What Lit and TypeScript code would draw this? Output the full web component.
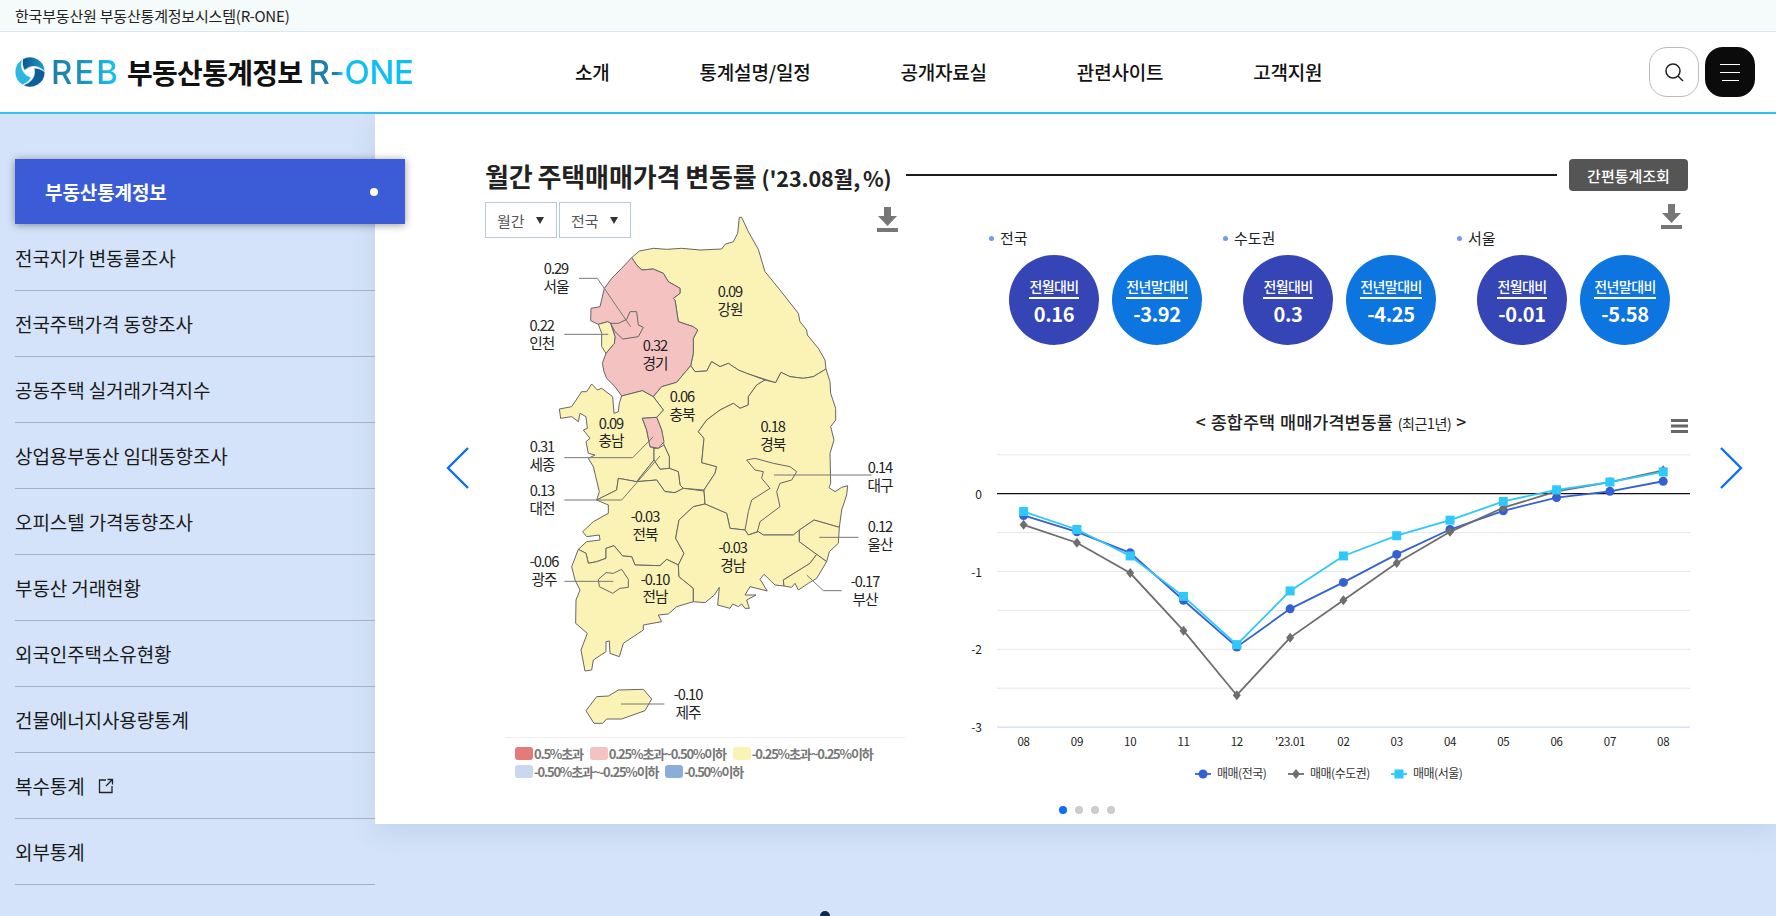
import { LitElement, css, html, svg } from "lit";
import { customElement } from "lit/decorators.js";

const FONT = css`"Noto Sans CJK KR", "Noto Sans", sans-serif`;

// map coordinates are 3x page pixels, so a 1px stroke is stroke-width 3
const YELLOW = "#fbf3b5";
const PINK = "#f5c2c2";

const REGIONS: { fill: string; pts: string }[] = [
  // 강원
  { fill: YELLOW, pts: "455,203 478,183 520,175 560,178 605,175 660,180 725,177 735,163 760,155 773,130 778,82 785,82 805,125 835,178 855,245 900,300 955,370 960,395 980,420 982,435 1015,475 1035,510 1038,537 1000,560 970,565 930,560 903,547 887,578 855,568 800,550 775,540 745,520 720,530 695,515 680,543 645,545 632,527 640,490 640,445 653,420 640,410 595,395 585,330 580,325 600,310 600,295 565,275 550,250 520,237 485,240 470,225" },
  // 경기
  { fill: PINK, pts: "455,203 470,225 485,240 520,237 550,250 565,275 600,295 600,310 580,325 585,330 595,395 640,410 653,420 640,445 640,490 632,527 590,577 545,590 520,620 487,602 425,618 405,590 380,565 372,545 367,520 378,490 403,460 405,440 392,400 383,395 355,403 332,392 333,355 360,350 373,295 395,265 425,235" },
  // 인천
  { fill: YELLOW, pts: "355,403 383,395 392,400 405,440 403,460 378,490 365,470 365,430" },
  // 서울
  { fill: PINK, pts: "392,400 415,400 440,388 450,365 470,365 475,405 490,412 475,440 428,447 405,425" },
  // 충북
  { fill: YELLOW, pts: "520,620 545,590 590,577 632,527 645,545 680,543 695,515 720,530 745,520 775,540 800,550 855,570 830,585 805,620 805,645 780,655 760,640 720,660 680,690 655,725 672,745 665,818 710,830 705,850 672,900 610,895 600,885 595,845 568,835 568,800 552,765 545,720 530,682 550,660" },
  // 충남
  { fill: YELLOW, pts: "425,618 487,602 520,620 550,660 530,682 487,685 500,720 510,770 522,775 522,810 470,875 415,865 410,900 350,930 358,905 340,830 325,805 345,795 325,790 318,755 330,745 310,720 322,715 318,680 300,670 295,695 275,680 242,685 238,657 275,650 305,605 320,605 335,582 352,600 365,595 398,620 402,670 415,665 418,640" },
  // 세종
  { fill: PINK, pts: "487,685 530,682 545,720 552,755 535,775 510,770 500,720" },
  // 대전
  { fill: YELLOW, pts: "522,775 535,775 552,765 568,800 568,835 540,838 522,810" },
  // 대전 남쪽
  { fill: YELLOW, pts: "522,810 540,838 568,835 595,845 600,885 610,895 585,908 555,905 530,870 470,875" },
  // 전북
  { fill: YELLOW, pts: "350,930 410,900 415,865 470,875 530,870 555,905 585,908 610,895 672,903 675,942 640,950 597,990 587,1045 612,1090 595,1125 560,1108 540,1127 465,1125 455,1100 428,1098 402,1067 378,1075 378,1105 350,1115 325,1120 318,1090 295,1078 320,1055 360,1050 358,1035 320,1040 308,1025 340,995 385,970 385,945" },
  // 전남
  { fill: YELLOW, pts: "295,1078 275,1130 285,1170 300,1200 288,1230 287,1300 322,1330 303,1380 315,1443 335,1440 340,1410 378,1385 378,1355 388,1353 390,1390 418,1400 430,1360 490,1320 490,1305 545,1295 535,1275 565,1272 590,1250 640,1235 640,1195 597,1160 595,1125 560,1108 540,1127 465,1125 455,1100 428,1098 402,1067 378,1075 378,1105 350,1115 325,1120 318,1090" },
  // 광주
  { fill: YELLOW, pts: "355,1168 378,1148 400,1150 425,1138 445,1168 445,1192 420,1195 398,1210 358,1190" },
  // 경북
  { fill: YELLOW, pts: "855,570 887,578 903,547 930,560 970,565 1000,560 1038,537 1050,575 1052,610 1067,655 1067,690 1052,710 1062,750 1050,790 1052,880 1047,893 1065,905 1085,892 1103,887 1100,915 1085,960 1078,1012 1002,990 958,1020 940,1035 850,1035 835,1025 805,1035 795,1020 750,1015 740,970 675,942 672,900 705,850 710,830 665,818 672,745 655,725 680,690 720,660 760,640 780,655 805,645 805,620 830,585" },
  // 대구
  { fill: YELLOW, pts: "800,810 825,805 880,820 930,830 950,845 935,870 900,880 890,905 900,950 840,995 832,1025 805,1035 795,1020 805,965 815,930 870,895 845,865 850,845 825,840" },
  // 경남
  { fill: YELLOW, pts: "675,942 640,950 597,990 587,1045 612,1090 595,1125 597,1160 640,1195 640,1235 675,1238 703,1215 718,1192 713,1245 750,1255 758,1242 775,1250 785,1242 795,1255 808,1255 800,1230 828,1215 795,1215 810,1190 862,1203 840,1168 852,1153 885,1185 912,1188 910,1170 990,1120 1010,1093 958,1055 958,1020 940,1035 850,1035 835,1025 805,1035 795,1020 750,1015 740,970" },
  // 울산
  { fill: YELLOW, pts: "958,1020 1002,990 1078,1012 1075,1060 1048,1085 1040,1115 958,1055" },
  // 부산
  { fill: YELLOW, pts: "1010,1093 1040,1115 1025,1140 1010,1165 985,1180 955,1200 945,1180 935,1192 912,1188 910,1170 990,1120" },
  // 제주
  { fill: YELLOW, pts: "318,1562 350,1520 385,1518 415,1500 490,1498 515,1527 495,1562 425,1587 380,1587 368,1600 342,1600" },
];

const LEADERS = [
  "297,265 352,265 452,410",
  "253,433 385,433",
  "253,803 458,803 520,740",
  "253,930 425,930 540,798",
  "882,855 1175,855",
  "1018,1042 1135,1042",
  "980,1155 1030,1202 1085,1202",
  "253,1174 400,1174",
  "423,1542 553,1542",
];

const LABELS: [string, string, number, number][] = [
  ["0.29", "서울", 228, 252],
  ["0.22", "인천", 185, 423],
  ["0.32", "경기", 525, 483],
  ["0.09", "강원", 750, 321],
  ["0.06", "충북", 606, 636],
  ["0.09", "충남", 393, 716],
  ["0.18", "경북", 878, 726],
  ["0.31", "세종", 186, 786],
  ["0.13", "대전", 186, 918],
  ["0.14", "대구", 1200, 849],
  ["-0.03", "전북", 495, 996],
  ["-0.03", "경남", 758, 1089],
  ["0.12", "울산", 1200, 1026],
  ["-0.06", "광주", 192, 1131],
  ["-0.10", "전남", 525, 1184],
  ["-0.17", "부산", 1155, 1191],
  ["-0.10", "제주", 624, 1531],
];

const LEGEND: [string, string][] = [
  ["#e57a7a", "0.5% 초과"],
  ["#f5c2c2", "0.25% 초과 ~ 0.50% 이하"],
  ["#fbf3b5", "-0.25% 초과 ~ 0.25% 이하"],
  ["#c9d8ef", "-0.50% 초과 ~ -0.25% 이하"],
  ["#8cadd9", "-0.50% 이하"],
];

const downloadIcon = html`<svg class="dl" width="21" height="25" viewBox="0 0 21 25" fill="#777">
  <path d="M7 0h7v9h6l-9.5 10L1 9h6z" /><rect y="21" width="21" height="4" />
</svg>`;

@customElement("region-map")
export class RegionMap extends LitElement {
  static styles = css`
    :host {
      display: block;
    }
    svg {
      display: block;
    }
    .num,
    .name {
      font-family: ${FONT};
      font-size: 44px;
      letter-spacing: -3px;
      fill: #222;
      text-anchor: middle;
    }
    .legend {
      width: 400px;
      box-sizing: border-box;
      margin-left: 25px;
      padding: 9px 10px 0;
      border-top: 1px solid #eee;
      display: flex;
      flex-wrap: wrap;
      gap: 5px 7px;
    }
    .item {
      display: flex;
      align-items: center;
      gap: 1px;
      height: 13px;
      font-family: ${FONT};
      font-size: 13px;
      font-weight: 700;
      letter-spacing: -1.25px;
      word-spacing: -1.5px;
      color: #777;
    }
    .swatch {
      width: 18px;
      height: 13px;
      border-radius: 3px;
    }
  `;

  render() {
    return html`
      <svg width="460" height="547" viewBox="0 0 1380 1641">
        ${REGIONS.map(
          (r) => svg`<polygon points=${r.pts} fill=${r.fill} stroke="#666" stroke-width="3" stroke-linejoin="round" />`
        )}
        ${LEADERS.map(
          (p) => svg`<polyline points=${p} fill="none" stroke="#777" stroke-width="3" />`
        )}
        ${LABELS.map(
          ([n, name, x, y]) => svg`
            <text class="num" x=${x} y=${y}>${n}</text>
            <text class="name" x=${x} y=${y + 53}>${name}</text>`
        )}
      </svg>
      <div class="legend">
        ${LEGEND.map(
          ([c, t]) => html`<div class="item"><span class="swatch" style="background:${c}"></span>${t}</div>`
        )}
      </div>
    `;
  }
}

const MONTHS = ["08", "09", "10", "11", "12", "'23.01", "02", "03", "04", "05", "06", "07", "08"];
const NATION = [-0.28, -0.49, -0.76, -1.37, -1.97, -1.48, -1.14, -0.78, -0.46, -0.22, -0.05, 0.03, 0.16];
const METRO = [-0.4, -0.63, -1.02, -1.76, -2.59, -1.85, -1.37, -0.89, -0.49, -0.18, 0.03, 0.15, 0.3];
const SEOUL = [-0.23, -0.46, -0.8, -1.32, -1.94, -1.25, -0.8, -0.54, -0.34, -0.1, 0.05, 0.15, 0.28];

const BLUE = "#3561d0";
const GREY = "#6e6e6e";
const CYAN = "#2ec8fb";

const px = (i: number) => 63.6 + 53.3 * i;
const py = (v: number) => 93.7 - v * 77.8;

function marker(kind: string, x: number, y: number, color: string) {
  if (kind === "circle") return svg`<circle cx=${x} cy=${y} r="4.5" fill=${color} />`;
  if (kind === "diamond") return svg`<path d="M${x} ${y - 5}l4 5-4 5-4-5z" fill=${color} />`;
  return svg`<rect x=${x - 4.5} y=${y - 4.5} width="9" height="9" fill=${color} />`;
}

@customElement("trend-chart")
export class TrendChart extends LitElement {
  static styles = css`
    :host {
      display: block;
    }
    svg {
      display: block;
      overflow: visible;
    }
    text {
      font-family: ${FONT};
      fill: #222;
    }
    .title {
      font-size: 17.5px;
      font-weight: 500;
      text-anchor: middle;
      word-spacing: 1px;
    }
    .small {
      font-size: 14px;
      font-weight: 400;
      letter-spacing: -0.4px;
    }
    .ylab {
      font-size: 12px;
      text-anchor: end;
    }
    .xlab {
      font-size: 11.5px;
      letter-spacing: -0.3px;
      text-anchor: middle;
    }
    .leg {
      font-size: 12px;
      letter-spacing: -0.5px;
      fill: #333;
    }
  `;

  render() {
    const lines = [-2.5, -2, -1.5, -1, -0.5, 0.5];
    const series: [number[], string, string][] = [
      [NATION, BLUE, "circle"],
      [METRO, GREY, "diamond"],
      [SEOUL, CYAN, "square"],
    ];
    const legend: [string, string, string, number][] = [
      ["매매(전국)", BLUE, "circle", 235],
      ["매매(수도권)", GREY, "diamond", 328],
      ["매매(서울)", CYAN, "square", 431],
    ];
    return html`
      <svg width="728" height="390" viewBox="0 0 728 390">
        <text class="title" x="371" y="29">&lt; 종합주택 매매가격변동률 <tspan class="small">(최근1년)</tspan> &gt;</text>
        <rect x="711" y="19" width="17" height="3" fill="#666" />
        <rect x="711" y="24.5" width="17" height="3" fill="#666" />
        <rect x="711" y="30" width="17" height="3" fill="#666" />
        ${lines.map(
          (v) => svg`<line x1="37" x2="730" y1=${py(v)} y2=${py(v)} stroke="#e6e6e6" />`
        )}
        <line x1="37" x2="730" y1=${py(-3)} y2=${py(-3)} stroke="#c4d2ea" />
        <line x1="37" x2="730" y1=${py(0)} y2=${py(0)} stroke="#111" stroke-width="1.3" />
        ${[0, -1, -2, -3].map(
          (v) => svg`<text class="ylab" x="22" y=${py(v) + 5}>${v}</text>`
        )}
        ${MONTHS.map(
          (m, i) => svg`<text class="xlab" x=${px(i)} y="346">${m}</text>`
        )}
        ${series.map(
          ([vals, color, kind]) => svg`
            <polyline fill="none" stroke=${color} stroke-width="1.8"
              points=${vals.map((v, i) => `${px(i)},${py(v)}`).join(" ")} />
            ${vals.map((v, i) => marker(kind, px(i), py(v), color))}`
        )}
        ${legend.map(
          ([t, color, kind, x]) => svg`
            <line x1=${x} x2=${x + 16} y1="374" y2="374" stroke=${color} stroke-width="1.8" />
            ${marker(kind, x + 8, 374, color)}
            <text class="leg" x=${x + 22} y="378">${t}</text>`
        )}
      </svg>
    `;
  }
}

const MENU = [
  "전국지가 변동률조사",
  "전국주택가격 동향조사",
  "공동주택 실거래가격지수",
  "상업용부동산 임대동향조사",
  "오피스텔 가격동향조사",
  "부동산 거래현황",
  "외국인주택소유현황",
  "건물에너지사용량통계",
  "복수통계",
  "외부통계",
];

const STATS: { name: string; month: string; year: string }[] = [
  { name: "전국", month: "0.16", year: "-3.92" },
  { name: "수도권", month: "0.3", year: "-4.25" },
  { name: "서울", month: "-0.01", year: "-5.58" },
];

const BLADE = "M15 0A15 15 0 0 1 28 22.5C26 14 20 9 11 11 11 7 12.5 3 15 0Z";

@customElement("app-root")
export class AppRoot extends LitElement {
  static styles = css`
    :host {
      display: block;
      position: relative;
      width: 1776px;
      height: 916px;
      overflow: hidden;
      background: #d4e3f9;
      font-family: ${FONT};
      color: #111;
    }
    .topbar {
      height: 31px;
      padding-left: 15px;
      display: flex;
      align-items: center;
      background: #f5fafb;
      border-bottom: 1px solid #dbe8f3;
      font-size: 15px;
      letter-spacing: -0.2px;
      color: #222;
    }
    .header {
      height: 80px;
      display: flex;
      align-items: center;
      background: #fff;
      border-bottom: 2px solid #2ec4f3;
    }
    .logo {
      width: 575px;
      padding-left: 15px;
      box-sizing: border-box;
      display: flex;
      align-items: center;
      flex: none;
    }
    .reb,
    .rone {
      font-family: Inter, sans-serif;
      font-size: 33px;
      font-weight: 500;
      line-height: 1;
      background-clip: text;
      -webkit-background-clip: text;
      color: transparent;
    }
    .reb {
      width: 68px;
      margin-left: 6px;
      letter-spacing: 2px;
      white-space: nowrap;
      background-image: linear-gradient(90deg, #1e7fa8, #1e90b8 45%, #18c8f5);
    }
    .logo b {
      margin-left: 8px;
      font-size: 28px;
      font-weight: 700;
      letter-spacing: -0.7px;
      color: #111;
    }
    .rone {
      margin-left: 6px;
      letter-spacing: -0.3px;
      background-image: linear-gradient(90deg, #1e7fa8 27%, #0cc0f5 31%);
    }
    .nav {
      display: flex;
      gap: 90px;
      margin-top: -2px;
      font-size: 19px;
      font-weight: 500;
      letter-spacing: -0.2px;
    }
    .tools {
      margin-left: auto;
      margin-right: 21px;
      display: flex;
      gap: 6px;
    }
    .search,
    .burger {
      width: 50px;
      height: 50px;
      border-radius: 18px;
      box-sizing: border-box;
      display: flex;
      align-items: center;
      justify-content: center;
    }
    .search {
      border: 1px solid #bbb;
    }
    .burger {
      background: #0b0b0b;
      flex-direction: column;
      gap: 7px;
      align-items: center;
    }
    .burger i {
      display: block;
      width: 20px;
      height: 1px;
      background: #fff;
    }
    .burger i:last-child {
      width: 17px;
    }
    .body {
      display: flex;
      align-items: flex-start;
    }
    .side {
      position: relative;
      z-index: 1;
      width: 375px;
      flex: none;
      padding-top: 45px;
    }
    .active {
      width: 390px;
      height: 65px;
      margin-left: 15px;
      box-sizing: border-box;
      padding: 0 27px 0 30px;
      display: flex;
      align-items: center;
      justify-content: space-between;
      background: #3b5cd6;
      box-shadow: 0 1px 8px rgba(0, 0, 0, 0.4);
      color: #fff;
      font-size: 19px;
      font-weight: 700;
      letter-spacing: -0.1px;
    }
    .active i {
      width: 8px;
      height: 8px;
      border-radius: 50%;
      background: #fff;
    }
    .menu {
      margin: 1px 0 0 15px;
    }
    .menu div {
      height: 66px;
      box-sizing: border-box;
      display: flex;
      align-items: center;
      gap: 13px;
      border-bottom: 1px solid #a9afbe;
      font-size: 19px;
      letter-spacing: -0.1px;
      color: #1a1a1a;
    }
    .panel {
      position: relative;
      flex: 1;
      min-width: 0;
      height: 710px;
      box-sizing: border-box;
      padding: 45px 88px 10px 110px;
      display: flex;
      flex-direction: column;
      background: #fff;
      box-shadow: 0 8px 24px rgba(60, 90, 140, 0.12);
    }
    .title-row {
      height: 32px;
      display: flex;
      align-items: center;
      flex: none;
    }
    h2 {
      margin: 0;
      font-size: 26px;
      font-weight: 700;
      letter-spacing: -0.1px;
      word-spacing: -1px;
      white-space: nowrap;
      color: #222;
    }
    h2 small {
      font-size: 21.5px;
      word-spacing: -2px;
    }
    .rule {
      flex: 1;
      height: 2px;
      margin: 0 12px 0 14px;
      background: #1a1a1a;
    }
    .quick {
      width: 119px;
      height: 32px;
      border-radius: 4px;
      background: #555;
      color: #fff;
      font-size: 15px;
      font-weight: 500;
      display: flex;
      align-items: center;
      justify-content: center;
    }
    .cols {
      display: flex;
      margin-top: 11px;
    }
    .left {
      width: 475px;
      flex: none;
    }
    .sel-row {
      display: flex;
      gap: 2px;
      padding-right: 62px;
    }
    .sel {
      width: 72px;
      height: 36px;
      box-sizing: border-box;
      border: 1px solid #b5cbe0;
      padding-left: 11px;
      display: flex;
      align-items: center;
      font-size: 15px;
      color: #555;
    }
    .sel i {
      margin-left: 11px;
      border-left: 4.5px solid transparent;
      border-right: 4.5px solid transparent;
      border-top: 7px solid #333;
    }
    .dl {
      display: block;
    }
    .sel-row .dl {
      margin: 5px 0 0 auto;
    }
    region-map {
      margin: -48px 0 0 -5px;
    }
    .right {
      flex: 1;
      min-width: 0;
    }
    .dl-row {
      display: flex;
      justify-content: flex-end;
      padding: 2px 6px 0 0;
    }
    .stats {
      display: flex;
      margin-left: 31px;
    }
    .group {
      flex: none;
      width: 234px;
    }
    .group h3 {
      margin: 0 0 8px -2px;
      height: 18px;
      display: flex;
      align-items: center;
      gap: 6px;
      font-size: 15px;
      font-weight: 400;
      line-height: 18px;
      color: #222;
    }
    .group h3 i {
      width: 5px;
      height: 5px;
      border-radius: 50%;
      background: #6f9bf0;
    }
    .circles {
      display: flex;
      gap: 13px;
      margin-left: 18px;
    }
    .circle {
      width: 90px;
      height: 90px;
      border-radius: 50%;
      display: flex;
      flex-direction: column;
      align-items: center;
      padding-top: 21px;
      box-sizing: border-box;
      color: #fff;
      background: #3545b5;
    }
    .circle.y {
      background: #0d75df;
    }
    .circle span {
      padding-bottom: 1px;
      border-bottom: 2px solid #fff;
      font-size: 14px;
      font-weight: 500;
      line-height: 20px;
      letter-spacing: -0.6px;
    }
    .circle b {
      margin-top: 2px;
      font-size: 20px;
      font-weight: 700;
      line-height: 26px;
      letter-spacing: -0.4px;
    }
    trend-chart {
      margin-top: 55px;
    }
    .dots {
      margin-top: auto;
      display: flex;
      justify-content: center;
      gap: 8px;
    }
    .dots i {
      width: 8px;
      height: 8px;
      border-radius: 50%;
      background: #ccc;
    }
    .dots i:first-child {
      background: #0d6efd;
    }
    .arrow {
      position: absolute;
      top: 332px;
    }
    .prev {
      left: 71px;
    }
    .next {
      right: 33px;
    }
    .peek {
      position: absolute;
      left: 820px;
      top: 911px;
      width: 10px;
      height: 10px;
      border-radius: 50%;
      background: #12294f;
    }
  `;

  render() {
    return html`
      <div class="topbar">한국부동산원 부동산통계정보시스템(R-ONE)</div>
      <header class="header">
        <div class="logo">
          <svg width="30" height="30" viewBox="0 0 30 30" stroke="#fff" stroke-width=".7">
            <defs>
              <linearGradient id="g1" x1="0" y1="0" x2="1" y2="1">
                <stop offset="0" stop-color="#0a4a80" /><stop offset="1" stop-color="#1da8d6" />
              </linearGradient>
            </defs>
            <path d=${BLADE} fill="url(#g1)" transform="rotate(-30 15 15)" />
            <path d=${BLADE} fill="#0d5f9a" transform="rotate(90 15 15)" />
            <path d=${BLADE} fill="#2cb8e2" transform="rotate(210 15 15)" />
          </svg>
          <span class="reb">REB</span>
          <b>부동산통계정보</b>
          <span class="rone">R-ONE</span>
        </div>
        <nav class="nav">
          <span>소개</span><span>통계설명/일정</span><span>공개자료실</span><span>관련사이트</span><span>고객지원</span>
        </nav>
        <div class="tools">
          <div class="search">
            <svg width="22" height="22" viewBox="0 0 22 22" fill="none" stroke="#222" stroke-width="1.5">
              <circle cx="10" cy="10" r="7" /><path d="M15 15l5 5" />
            </svg>
          </div>
          <div class="burger"><i></i><i></i><i></i></div>
        </div>
      </header>
      <div class="body">
        <aside class="side">
          <div class="active">부동산통계정보<i></i></div>
          <div class="menu">
            ${MENU.map(
              (m) => html`<div>
                ${m}
                ${m === "복수통계"
                  ? html`<svg width="16" height="16" viewBox="0 0 16 16" fill="none" stroke="#222" stroke-width="1.3">
                      <path d="M8 2H1.5v12.5h12.5V8M9.5 1.5h5v5M14.5 1.5L8 8" />
                    </svg>`
                  : ""}
              </div>`
            )}
          </div>
        </aside>
        <main class="panel">
          <div class="title-row">
            <h2>월간 주택매매가격 변동률 <small>('23.08월, %)</small></h2>
            <div class="rule"></div>
            <div class="quick">간편통계조회</div>
          </div>
          <div class="cols">
            <section class="left">
              <div class="sel-row">
                <div class="sel">월간<i></i></div>
                <div class="sel">전국<i></i></div>
                ${downloadIcon}
              </div>
              <region-map></region-map>
            </section>
            <section class="right">
              <div class="dl-row">${downloadIcon}</div>
              <div class="stats">
                ${STATS.map(
                  (s) => html`<div class="group">
                    <h3><i></i>${s.name}</h3>
                    <div class="circles">
                      <div class="circle"><span>전월대비</span><b>${s.month}</b></div>
                      <div class="circle y"><span>전년말대비</span><b>${s.year}</b></div>
                    </div>
                  </div>`
                )}
              </div>
              <trend-chart></trend-chart>
            </section>
          </div>
          <div class="dots"><i></i><i></i><i></i><i></i></div>
          <svg class="arrow prev" width="24" height="44" viewBox="0 0 24 44" fill="none" stroke="#0d6efd" stroke-width="2.4">
            <path d="M22 2L2 22l20 20" />
          </svg>
          <svg class="arrow next" width="24" height="44" viewBox="0 0 24 44" fill="none" stroke="#0d6efd" stroke-width="2.4">
            <path d="M2 2l20 20L2 42" />
          </svg>
        </main>
      </div>
      <div class="peek"></div>
    `;
  }
}
